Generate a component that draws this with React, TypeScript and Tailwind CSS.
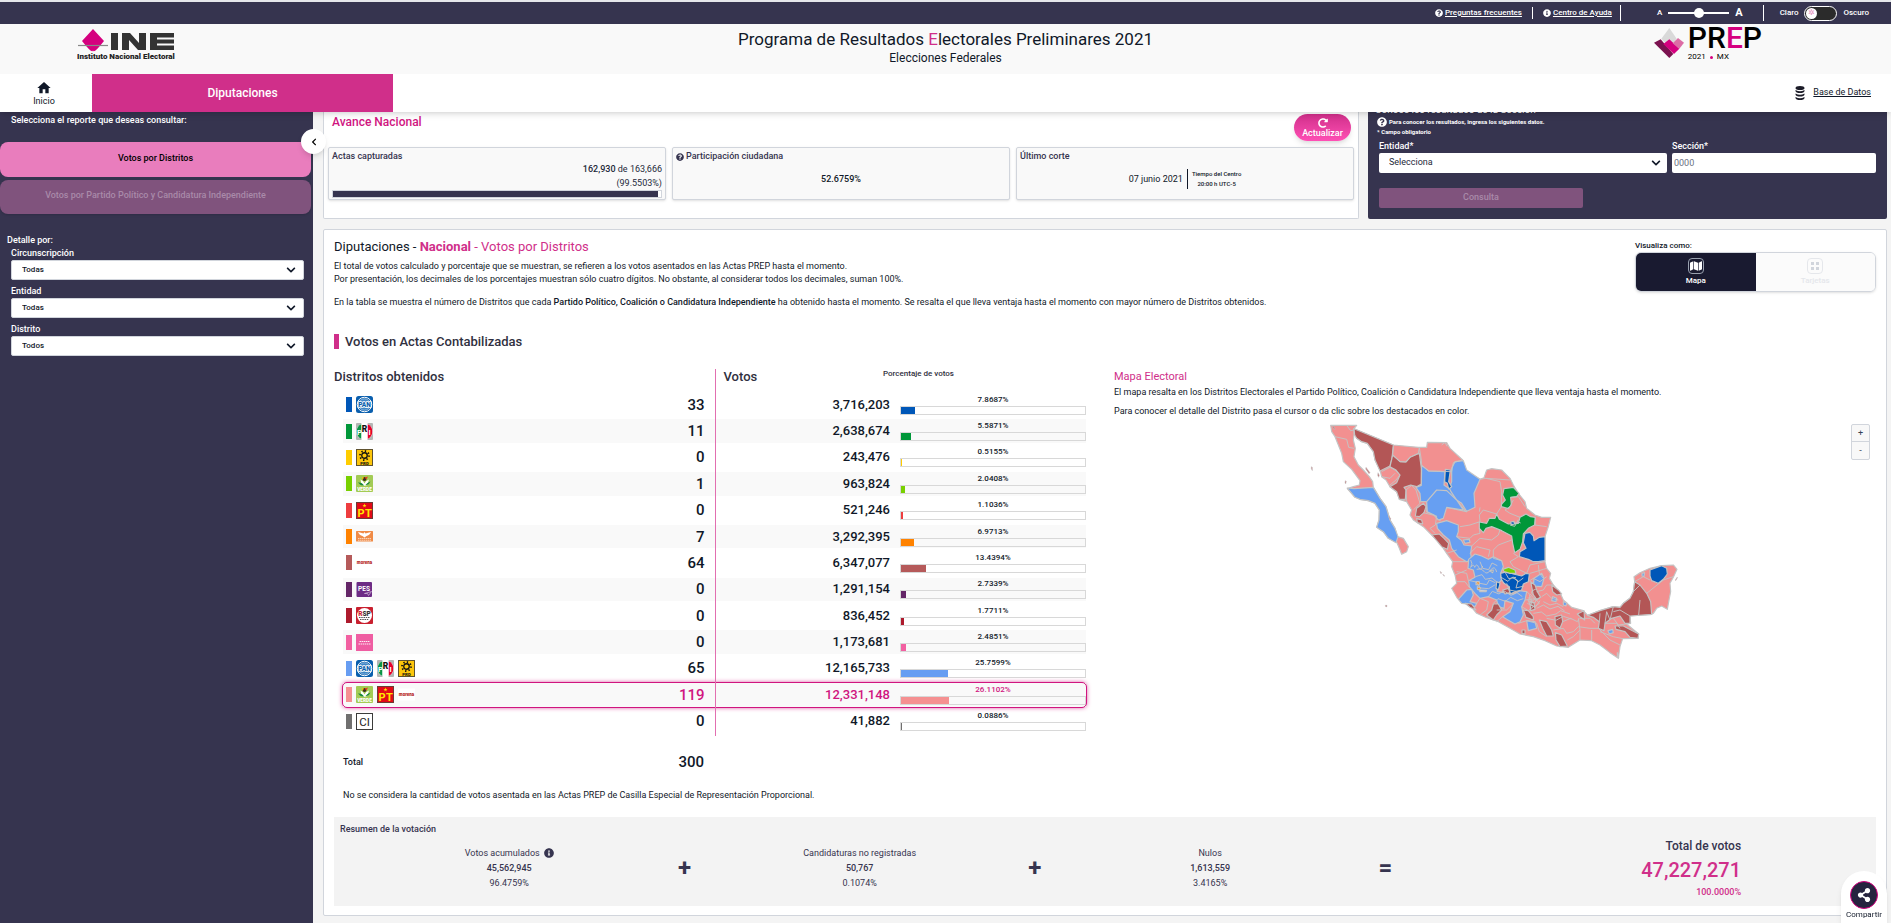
import React from "react";
import {
  FaChevronDown,
  FaChevronLeft,
  FaInfoCircle,
  FaMap,
  FaQuestionCircle,
  FaRedoAlt,
  FaShareAlt,
} from "react-icons/fa";
import { MdHome } from "react-icons/md";

type PartyKey = "pan" | "pri" | "prd" | "verde" | "pt" | "mc" | "morena" | "pes" | "rsp" | "fxm" | "ci";

interface Row {
  parties: PartyKey[];
  swatch: string;
  districts: number;
  votes: string;
  percent: number;
  highlight?: boolean;
}

const rows: Row[] = [
  { parties: ["pan"], swatch: "bg-[#0057b8]", districts: 33, votes: "3,716,203", percent: 7.8687 },
  { parties: ["pri"], swatch: "bg-[#009739]", districts: 11, votes: "2,638,674", percent: 5.5871 },
  { parties: ["prd"], swatch: "bg-[#ffcd00]", districts: 0, votes: "243,476", percent: 0.5155 },
  { parties: ["verde"], swatch: "bg-[#78d000]", districts: 1, votes: "963,824", percent: 2.0408 },
  { parties: ["pt"], swatch: "bg-[#ee3d3f]", districts: 0, votes: "521,246", percent: 1.1036 },
  { parties: ["mc"], swatch: "bg-[#ff8200]", districts: 7, votes: "3,292,395", percent: 6.9713 },
  { parties: ["morena"], swatch: "bg-[#b55a5a]", districts: 64, votes: "6,347,077", percent: 13.4394 },
  { parties: ["pes"], swatch: "bg-[#642667]", districts: 0, votes: "1,291,154", percent: 2.7339 },
  { parties: ["rsp"], swatch: "bg-[#ad1a2d]", districts: 0, votes: "836,452", percent: 1.7711 },
  { parties: ["fxm"], swatch: "bg-[#f260a1]", districts: 0, votes: "1,173,681", percent: 2.4851 },
  { parties: ["pan", "pri", "prd"], swatch: "bg-[#679df2]", districts: 65, votes: "12,165,733", percent: 25.7599 },
  {
    parties: ["verde", "pt", "morena"],
    swatch: "bg-[#f59091]",
    districts: 119,
    votes: "12,331,148",
    percent: 26.1102,
    highlight: true,
  },
  { parties: ["ci"], swatch: "bg-[#706f6f]", districts: 0, votes: "41,882", percent: 0.0886 },
];

const logoText = "Roboto, sans-serif";

function PartyLogo({ party }: { party: PartyKey }) {
  const shapes: Record<PartyKey, React.ReactNode> = {
    pan: (
      <>
        <rect width="34" height="34" rx="5" fill="#0a5fae" />
        <circle cx="17" cy="17" r="14.5" fill="none" stroke="#fff" strokeWidth="2" />
        <circle cx="17" cy="17" r="11.5" fill="#3f86c6" stroke="#fff" strokeWidth="1" />
        <text x="17" y="22" textAnchor="middle" fontSize="13" fontWeight="900" fill="#0a5fae" stroke="#fff" strokeWidth="3" paintOrder="stroke" fontFamily={logoText}>PAN</text>
      </>
    ),
    pri: (
      <>
        <rect width="34" height="34" rx="2" fill="#b4b6b5" />
        <circle cx="17" cy="17" r="16.5" fill="#fff" />
        <path d="M11 2A16.5 16.5 0 0 0 11 32z" fill="#0a9447" />
        <path d="M23 2A16.5 16.5 0 0 1 23 32z" fill="#e4002b" />
        <rect x="11" y="0" width="12" height="34" fill="#fff" />
        <text x="7" y="24" textAnchor="middle" fontSize="15" fontWeight="700" fill="#fff" fontFamily={logoText}>P</text>
        <text x="17" y="18" textAnchor="middle" fontSize="17" fontWeight="900" fill="#111" fontFamily={logoText}>R</text>
        <text x="27" y="24" textAnchor="middle" fontSize="15" fontWeight="700" fill="#fff" fontFamily={logoText}>I</text>
      </>
    ),
    prd: (
      <>
        <rect x="1" y="1" width="32" height="32" fill="#fdc60b" stroke="#5f5230" strokeWidth="2" />
        <circle cx="17" cy="13" r="5.5" fill="none" stroke="#111" strokeWidth="2.6" />
        <circle cx="17" cy="13" r="9" fill="none" stroke="#111" strokeWidth="3.6" strokeDasharray="2.6 4.4" />
        <text x="17" y="32" textAnchor="middle" fontSize="8.5" fontWeight="900" fill="#111" fontFamily={logoText}>PRD</text>
      </>
    ),
    verde: (
      <>
        <rect width="34" height="34" rx="2" fill="#a3cb55" />
        <path d="M9 9q6 2 8 8q2-6 9-8l-3 10q-6 5-12 0z" fill="#fff" />
        <path d="M4 15q8-1 12 6q-7 1-12-6M29 13q-7 2-10 7q6 1 10-7" fill="#18873f" />
        <circle cx="17" cy="8" r="4" fill="#3a2d1d" />
        <path d="M17 5l7-2l-3 6z" fill="#e2431e" />
        <path d="M12 4l4 1l-3 5z" fill="#f6c700" />
        <text x="17" y="32" textAnchor="middle" fontSize="9.5" fontWeight="900" fill="#fff" fontFamily={logoText}>VERDE</text>
      </>
    ),
    pt: (
      <>
        <rect x="1" y="1" width="32" height="32" fill="#e20a17" stroke="#6d3a35" strokeWidth="2" />
        <text x="10" y="29" textAnchor="middle" fontSize="22" fontWeight="700" fill="#ffe600" fontFamily={logoText}>P</text>
        <text x="25" y="29" textAnchor="middle" fontSize="22" fontWeight="700" fill="#ffe600" fontFamily={logoText}>T</text>
        <path d="M17 3l1 3l3 0l-2.500 2l1 3l-2.500-2l-2.500 2l1-3l-2.500-2l3 0z" fill="#ffe600" />
      </>
    ),
    mc: (
      <>
        <rect y="6" width="34" height="21" rx="1" fill="#f08b46" />
        <path d="M4 8q6 1 11 3l2-3l2 3q5-2 11-3q-3 7-9 8l-4 3l-4-3q-6-1-9-8z" fill="#fff" />
        <path d="M4 21h26M4 24.500h26" stroke="#fff" strokeWidth="1.6" strokeDasharray="3 1" opacity=".75" />
      </>
    ),
    morena: (
      <>
        <rect y="5" width="34" height="24" fill="#fff" />
        <text x="17" y="20" textAnchor="middle" fontSize="9" fontWeight="900" fill="#b5261e" fontFamily={logoText}>morena</text>
      </>
    ),
    pes: (
      <>
        <rect x="1" y="2" width="31" height="30" rx="2" fill="#6d2c85" />
        <text x="16" y="20" textAnchor="middle" fontSize="13" fontWeight="700" fill="#fff" fontFamily={logoText}>PES</text>
        <path d="M17 25l14-4l-6 8l-2-4z" fill="none" stroke="#d8c3e0" strokeWidth="1.3" />
      </>
    ),
    rsp: (
      <>
        <rect width="34" height="34" rx="2" fill="#c9202f" />
        <circle cx="17" cy="17" r="15" fill="#fff" />
        <text x="17" y="17" textAnchor="middle" fontSize="13" fontWeight="900" fill="#333" fontFamily={logoText}>
          <tspan fill="#c9202f">R</tspan>SP
        </text>
        <path d="M6 21h22M8 25h18" stroke="#555" strokeWidth="2" strokeDasharray="3 1.500" />
      </>
    ),
    fxm: (
      <>
        <rect width="34" height="34" fill="#ef5da2" />
        <path d="M7 15h20M5 20h24" stroke="#fff" strokeWidth="2.400" strokeDasharray="3 1.200" opacity=".9" />
      </>
    ),
    ci: (
      <>
        <rect x="1" y="1" width="32" height="32" fill="#fff" stroke="#3c3c3b" strokeWidth="2" />
        <text x="17" y="25" textAnchor="middle" fontSize="23" fill="#222" fontFamily={logoText}>CI</text>
      </>
    ),
  };
  return (
    <svg viewBox="0 0 34 34" className="size-[17px] shrink-0" role="img" aria-label={party}>
      {shapes[party]}
    </svg>
  );
}

function SelectField({ id, label, value }: { id: string; label: string; value: string }) {
  return (
    <div className="flex flex-col gap-px">
      <label htmlFor={id} className="text-[9px] leading-3 font-medium text-white">{label}</label>
      <div className="relative">
        <select id={id} className="block h-5 w-full appearance-none rounded-xs border border-gray-300 bg-white pl-2.5 text-[8px] font-medium text-gray-900">
          <option>{value}</option>
        </select>
        <FaChevronDown className="pointer-events-none absolute top-[5px] right-2 size-2.5 text-gray-900" />
      </div>
    </div>
  );
}

function IneLogo() {
  return (
    <svg viewBox="0 0 98 31" className="h-[31px] w-[98px]" role="img" aria-label="INE Instituto Nacional Electoral">
      <path d="M16 0L27 12Q16 26 16 21Q16 26 5 12z" fill="#d5007f" />
      <path d="M1 16.500H31" stroke="#888" strokeWidth="1.200" />
      <path d="M34 4h7v17h-7zM45 4h8l9 10V4h7v17h-8l-9-10v10h-7z" fill="#333" />
      <path d="M73 4h24v4.500h-17v2h17v4h-17v2h17V21H73z" fill="#333" />
      <text x="0" y="30" fontSize="8" fontWeight="900" fill="#222" fontFamily="Roboto, sans-serif">Instituto Nacional Electoral</text>
    </svg>
  );
}

function PrepLogo() {
  return (
    <div className="flex items-start gap-1">
      <svg viewBox="0 0 90 90" className="mt-1 size-[30px]" aria-hidden="true">
        <path d="M46 0L68 32L46 58L22 32z" fill="#d9d9d9" />
        <path d="M0 44L20 34L58 78L46 90z" fill="#7b1250" />
        <path d="M28 48L46 34L76 62L60 78z" fill="#d5007f" />
        <path d="M56 46L72 30L90 44L76 62z" fill="#dc6ca5" />
      </svg>
      <div className="text-black">
        <div className="text-[30px] leading-7 font-medium">
          PR<span className="text-[#d5007f]">E</span>P
        </div>
        <div className="flex items-center gap-1 text-[8px] leading-[10px]">
          2021 <span className="size-[3px] rounded-full bg-[#d5007f]" /> MX
        </div>
      </div>
    </div>
  );
}

function DatabaseIcon() {
  return (
    <svg viewBox="0 0 20 28" className="h-3.5 w-2.5 fill-[#1c1c28]" aria-hidden="true">
      <ellipse cx="10" cy="4" rx="9" ry="4" />
      <path d="M1 8q9 5 18 0v2q-1 4-9 4t-9-4zM1 15q9 5 18 0v2q-1 4-9 4t-9-4zM1 22q9 5 18 0v2q-1 4-9 4t-9-4z" />
    </svg>
  );
}

const SALMON = "#f29090";
const RED = "#b35656";
const BLUE = "#679ff2";
const NAVY = "#0057b8";
const GREEN = "#009739";

const regions: { fill: string; d: string }[] = [
  { fill: SALMON, d: "M152 46L230 46L222 56L222 75L220 90L226 115L222 140L235 165L250 180L268 200L278 215L280 232L300 265L318 290L330 330L345 355L352 380L370 385L385 410L380 425L365 433L358 415L350 397L325 385L310 365L290 352L297 330L298 300L285 280L265 272L240 268L225 262L202 236L220 230L238 225L240 212L215 178L190 155L185 130L175 105L165 80L155 65z" },
  { fill: SALMON, d: "M222 56L340 105L415 112L440 112L442 97L500 98L510 115L548 150L552 180L600 208L612 203L620 180L635 176L665 180L690 205L700 225L715 250L735 275L740 295L765 315L785 322L812 322L805 350L795 380L795 455L800 475L812 490L808 505L820 525L840 548L850 570L875 592L910 602L923 616L960 602L1000 590L1020 592L1030 580L1050 565L1060 545L1064 515L1062 500L1080 488L1110 475L1145 467L1180 465L1191 478L1180 502L1170 520L1172 545L1168 565L1162 598L1145 588L1130 595L1120 610L1115 613L1050 618L1052 640L1040 642L1076 672L1074 685L1028 686L1020 710L1015 745L990 728L960 705L935 692L900 690L865 712L830 708L795 692L760 680L720 672L690 655L655 635L620 623L590 610L575 592L555 580L532 565L515 535L530 520L525 495L515 470L518 455L500 430L480 400L455 375L430 350L400 330L390 315L395 300L380 275L358 268L350 245L330 230L318 210L305 200L300 180L285 150L280 125L262 100L245 95L230 85z" },
  { fill: BLUE, d: "M202 234L222 236L280 232L300 265L318 290L330 330L345 355L354 380L348 398L325 385L310 365L290 352L297 330L298 300L285 280L265 272L240 268L225 262z" },
  { fill: RED, d: "M222 56L340 105L336 145L330 168L300 183L285 150L280 125L262 100L245 95L230 85L224 75z" },
  { fill: RED, d: "M338 135L360 155L378 156L390 142L418 130L424 175L424 222L410 230L392 225L372 232L378 240L376 268L358 268L350 245L330 230L350 218L360 195L348 180L330 170z" },
  { fill: RED, d: "M410 295L430 280L438 290L432 308L418 320L406 318zM410 326L425 330L428 342L412 338zM456 375L478 372L492 385L506 400L502 418L485 410L470 392z" },
  { fill: BLUE, d: "M425 166L446 183L495 185L492 225L510 238L530 270L555 302L560 305L500 292L490 305L480 332L470 318L440 305L440 275L422 275L420 250L408 232L424 226z" },
  { fill: BLUE, d: "M515 175L525 155L550 152L560 180L600 208L582 250L585 292L560 304L545 280L530 270L515 248L508 235L515 215z" },
  { fill: NAVY, d: "M496 178L511 180L506 215L515 230L506 237L502 220L494 215z" },
  { fill: BLUE, d: "M440 275L470 240L500 242L530 270L550 300L500 292L490 325L475 330L462 315L442 305z" },
  { fill: BLUE, d: "M470 340L500 332L535 345L535 365L530 380L545 392L552 405L575 408L572 430L575 450L560 455L535 440L515 415L508 390L490 375L472 355z" },
  { fill: BLUE, d: "M550 390L568 388L570 397L555 400z" },
  { fill: GREEN, d: "M672 236L700 232L717 250L710 260L692 262L694 285L685 296L664 290L665 282L676 270L668 255z" },
  { fill: GREEN, d: "M598 336L620 340L628 325L645 325L650 312L658 328L685 342L715 340L720 322L738 312L752 320L766 322L764 345L745 355L730 372L728 395L720 418L704 428L698 400L695 378L665 362L635 350L618 355L610 368L598 355z" },
  { fill: NAVY, d: "M735 370L750 367L760 378L762 392L778 382L795 380L795 452L775 455L760 455L745 448L718 440L720 425L738 415L730 398z" },
  { fill: NAVY, d: "M692 336L702 334L704 342L694 344z" },
  { fill: BLUE, d: "M566 448L585 432L605 438L625 448L640 440L665 452L670 470L662 490L665 510L650 525L652 545L700 552L720 542L740 545L735 570L725 590L730 615L720 635L705 642L680 628L668 620L690 605L700 580L675 572L672 595L655 590L650 570L625 560L600 565L585 550L568 530L566 512L585 502L580 480L564 475z" },
  { fill: BLUE, d: "M535 568L560 540L575 538L580 555L570 575L590 580L585 590L560 582L545 580zM740 632L765 635L770 655L745 662zM762 505L785 490L792 505L785 530L760 528zM818 560L830 565L828 575L815 572zM850 575L860 578L858 588L850 585z" },
  { fill: NAVY, d: "M662 490L680 485L700 492L725 498L738 490L748 492L745 515L730 522L725 540L705 545L690 552L688 530L672 520L664 508zM650 515L660 520L655 540L648 535zM630 482L640 480L638 488z" },
  { fill: "#78d000", d: "M668 478L685 472L705 480L708 490L690 490L672 485z" },
  { fill: "#ff9326", d: "M588 515L598 515L598 525L588 524zM592 530L602 534L598 540L592 538z" },
  { fill: "#ffffff", d: "M598 540L620 541L618 545L600 545z" },
  { fill: RED, d: "M620 615L635 600L640 582L655 582L665 600L650 615L640 630zM555 580L575 582L588 600L570 592zM730 600L745 602L760 620L760 630L738 622zM778 630L800 635L815 660L820 678L800 678L788 655zM826 668L845 675L862 708L840 710L828 690zM825 620L845 615L848 635L840 655L826 645zM752 515L765 525L772 545L782 562L770 568L760 555zM815 525L835 540L845 552L830 555L818 545zM750 575L762 578L765 598L752 602zM668 540L685 535L690 548L675 552zM726 660L735 660L735 672L726 670zM892 612L912 602L914 630L900 620z" },
  { fill: RED, d: "M923 616L960 602L1000 590L1020 592L1030 580L1050 565L1060 545L1064 515L1080 525L1100 550L1112 575L1115 613L1050 618L1050 640L1035 640L1020 618L995 625L975 640L972 662L955 655L958 635L940 622z" },
  { fill: RED, d: "M1005 648L1030 648L1076 672L1074 685L1050 682L1035 665L1008 658zM1012 728L1016 742L1012 740z" },
  { fill: BLUE, d: "M984 662L998 658L1000 668L988 672zM1086 490L1094 488L1092 500L1086 498z" },
  { fill: NAVY, d: "M1110 480L1145 467L1160 475L1162 492L1150 508L1135 520L1115 512L1110 498z" },
];

const borders = [
  "M165 80L200 88L206 112L222 115M200 46L212 62L222 60",
  "M340 110L338 135L360 155L378 156L390 142L415 130L418 112L424 150L425 166L446 183L515 185L520 158L548 150",
  "M305 185L330 172L345 180L360 195L348 210L330 225M305 200L330 205L345 190",
  "M380 275L378 240L395 226L408 240L420 280L400 300M430 308L470 318L466 345L450 355L465 370",
  "M600 208L618 205L660 215L665 245L664 290L650 312L610 300L598 315L600 335L570 345L540 350M600 292L598 305",
  "M618 205L690 210M694 262L715 260L735 290M700 270L690 290L675 300L690 310L720 322M764 345L800 350M766 322L765 345",
  "M530 380L570 385L580 375L600 370L598 355M575 408L600 385L635 390L655 375L660 360M570 430L590 410L630 420L625 440M640 420L655 405L695 390M640 420L640 445L665 452",
  "M700 430L715 440L690 455L700 470L740 490L750 465L795 455M500 430L530 420M518 455L560 455M530 485L560 490L565 512M530 515L555 515L570 535M525 495L560 480",
  "M572 450q8 12 0 22q10 -12 12 0q6 -14 12 0t12 -4M590 478q14 -6 22 6t20 -4t18 6M600 455l8 20l18 4l10 -20l16 8M586 500l20 -6l10 14l20 -4l14 12M600 520l20 4l8 -14l18 8M570 512l18 4l14 18l24 2l20 -12",
  "M625 560l12 -16l20 8l14 -10l22 14l18 -8l16 12M640 580l14 -14l22 8l16 -12l20 10l18 -6M660 500l24 14l12 -12l18 10l-6 22l24 -6M680 520l8 20l20 4M700 500l14 16l16 -12M676 488l10 18l22 -4",
  "M590 580L600 565L625 575L620 600L600 615M650 600L680 600L700 580M725 590L745 602L760 590M668 620L650 635M715 640L740 632L770 640L778 665L800 680",
  "M740 545q12 6 8 20t16 14q10 -14 -4 -24t8 -18M744 562l12 12l10 -8l12 14l-14 10l-14 -6l-6 -14M750 552l18 20l14 -10M742 580l24 12l14 -20M752 558l4 30M736 570l30 -4",
  "M745 515L760 505L780 515L800 500M775 465L778 490L790 505M750 490L790 478L800 475M770 545L790 540L800 525L820 525M785 560L800 550L815 565L835 570M790 575L810 585L830 580L850 590",
  "M770 595l20 -10l20 12l24 -8l20 14M760 610l24 -4l16 12l28 -6l14 -10l28 10M800 625l28 6l22 -12l24 8M848 635L872 625L892 635L898 625M820 660L850 655L860 670L880 665L895 650M862 690L880 680L900 660L895 625",
  "M895 650L930 655L955 655M900 625L930 625L945 640M900 660L900 690M935 660L935 690M955 655L990 690L1020 705M960 665L1000 680L1028 686M975 640L1010 640L1020 655M1000 625L1015 645L1040 642",
  "M958 635L960 610M975 640L980 605L990 630L1000 590M1000 605L1020 600L1050 618M1080 570L1076 615M1064 515L1090 500L1110 510M1060 545L1080 525M1100 550L1150 510L1180 500",
  "M700 335l10 6l4 -12M690 345l14 4l8 -14l10 4M485 105l10 -8l6 12",
];

function ElectoralMap() {
  return (
    <svg viewBox="0 36 1290 724" className="block h-auto w-[430px] max-w-full" role="img" aria-label="Mapa Electoral">
      <g stroke="#c4c4c4" strokeWidth="3.500" strokeLinejoin="round">
        {regions.map((region, i) => (
          <path key={i} d={region.d} fill={region.fill} />
        ))}
        {borders.map((d, i) => (
          <path key={i} d={d} fill="none" strokeWidth="2.800" />
        ))}
      </g>
      <path
        d="M94 170l3 2v10l-3-6zM196 212l3 2l-2 8l-2-4zM258 172l12 16l-3 3l-10-14zM294 188l4 8l-2 6l-3-6zM480 484l5 4l-2 3zM488 492l6 6l-2 1zM316 586l5 0l0 4l-4 0zM325 315l8 12l-3 2zM1186 510l6-9l0 3l-5 8zM157 48l6 2l2 8l-4-1z"
        fill="#c07a7c"
        stroke="#c4c4c4"
        strokeWidth="1.500"
      />
    </svg>
  );
}

function TopBar() {
  return (
    <div className="flex h-6 items-center justify-end border-t-2 border-gray-200 bg-[#36344f] pr-[22px] text-[8px] font-medium text-white">
      <a href="#faq" className="flex items-center gap-0.5">
        <FaQuestionCircle className="size-2" /> <span className="underline">Preguntas frecuentes</span>
      </a>
      <span className="mx-2.5 h-3 w-px bg-white" />
      <a href="#ayuda" className="flex items-center gap-0.5">
        <FaInfoCircle className="size-2" /> <span className="underline">Centro de Ayuda</span>
      </a>
      <span className="mr-9 ml-2 h-4 w-px bg-white" />
      <label className="flex items-center gap-1.5">
        <span>A</span>
        <input
          type="range"
          defaultValue={50}
          aria-label="Tamaño de texto"
          className="h-0.5 w-[61px] appearance-none bg-white [&::-webkit-slider-thumb]:size-2.5 [&::-webkit-slider-thumb]:appearance-none [&::-webkit-slider-thumb]:rounded-full [&::-webkit-slider-thumb]:bg-white"
        />
        <span className="text-[11px] font-bold">A</span>
      </label>
      <span className="mr-4 ml-5 h-4 w-px bg-white" />
      <label className="flex items-center gap-1.5">
        <span>Claro</span>
        <input
          type="checkbox"
          className="flex h-[15px] w-[33px] appearance-none items-center rounded-full border border-white bg-[#2b2b2b] before:ml-px before:flex before:size-[11px] before:items-center before:justify-center before:rounded-full before:bg-white before:text-[8px] before:leading-none before:text-[#e58fbd] before:content-['✲']"
        />
        <span>Oscuro</span>
      </label>
    </div>
  );
}

function Header() {
  return (
    <header className="relative z-10 shadow-md">
      <TopBar />
      <div className="grid h-[50px] grid-cols-[1fr_auto_1fr] bg-[#f9f9f9]">
        <div className="pt-[5px] pl-[77px]"><IneLogo /></div>
        <div className="pt-1 text-center text-gray-900">
          <h1 className="text-[17px] leading-[22px]">
            Programa de Resultados <span className="text-[#d02f8a]">E</span>lectorales Preliminares 2021
          </h1>
          <p className="text-xs leading-4">Elecciones Federales</p>
        </div>
        <div className="flex justify-end pr-[129px]"><PrepLogo /></div>
      </div>
      <nav className="flex h-[38px] items-stretch bg-white">
        <a href="#inicio" className="flex w-[92px] flex-col items-center justify-center pr-1 text-[9px] leading-[11px] text-gray-900">
          <MdHome className="size-4" />
          Inicio
        </a>
        <a href="#diputaciones" className="flex w-[301px] items-center justify-center bg-[#d02f8a] text-xs font-medium text-white">
          Diputaciones
        </a>
        <a href="#datos" className="mr-5 ml-auto flex items-center gap-2 text-[9px] text-gray-900">
          <DatabaseIcon />
          <span className="underline">Base de Datos</span>
        </a>
      </nav>
    </header>
  );
}

function Sidebar() {
  return (
    <aside className="relative w-[313px] shrink-0 bg-[#36344f] pt-px">
      <p className="pl-[11px] text-[9px] leading-[14px] font-medium text-white">Selecciona el reporte que deseas consultar:</p>
      <div className="mt-[15px] mr-0.5 flex flex-col gap-[3px] text-[9px] font-medium">
        <button className="h-[35px] rounded-lg bg-[#e97dbd] pb-0.5 text-black">Votos por Distritos</button>
        <button disabled className="h-[34px] rounded-lg bg-[#80537d] pb-0.5 text-[#a98aa9] shadow">
          Votos por Partido Político y Candidatura Independiente
        </button>
      </div>
      <button
        aria-label="Contraer menú"
        className="absolute top-[17px] -right-[13px] flex size-[25px] items-center justify-center rounded-full bg-white text-black shadow-md"
      >
        <FaChevronLeft className="size-2" />
      </button>
      <h2 className="mt-[19px] pl-[7px] text-[9px] leading-[14px] font-medium text-white">Detalle por:</h2>
      <div className="flex flex-col gap-[5px] pr-[9px] pl-[11px]">
        <SelectField id="circunscripcion" label="Circunscripción" value="Todas" />
        <SelectField id="entidad" label="Entidad" value="Todas" />
        <SelectField id="distrito" label="Distrito" value="Todos" />
      </div>
    </aside>
  );
}

function Progress() {
  const box = "h-[53px] rounded-xs border border-gray-300 bg-[#f9f9f9] px-[3px] pt-0.5 shadow-sm";
  return (
    <section className="flex-1 rounded-b-xs border-x border-b border-gray-300 bg-white px-1 pb-[18px]">
      <div className="flex h-[35px] items-start justify-between pr-[3px] pl-1">
        <h2 className="pt-0.5 text-xs leading-4 font-medium text-[#d0157f]">Avance Nacional</h2>
        <button className="mt-0.5 flex h-[27px] w-[57px] flex-col items-center justify-center rounded-full bg-linear-to-b from-[#d02f8a] to-[#ff4fb5] text-[9px] leading-[10px] font-medium text-white shadow-md">
          <FaRedoAlt className="size-2.5" />
          Actualizar
        </button>
      </div>
      <div className="grid grid-cols-3 gap-1.5 text-[9px] text-[#36344f]">
        <div className={box}>
          <h3 className="font-medium leading-[13px]">Actas capturadas</h3>
          <p className="text-right leading-[13px] text-gray-800"><b className="font-medium">162,930</b> de 163,666</p>
          <p className="text-right leading-[14px] text-gray-800">(99.5503%)</p>
          <div className="h-2 border border-gray-300 bg-white"><div className="h-full w-[99%] bg-[#36344f]" /></div>
        </div>
        <div className={box}>
          <h3 className="flex items-center gap-0.5 font-medium leading-[13px]"><FaQuestionCircle className="size-2" /> Participación ciudadana</h3>
          <p className="mt-2.5 text-center font-medium leading-[13px] text-gray-900">52.6759%</p>
        </div>
        <div className={box}>
          <h3 className="font-medium leading-[13px]">Último corte</h3>
          <div className="mt-1.5 flex items-center justify-center text-gray-900">
            <span className="border-r border-gray-900 pr-1 leading-5">07 junio 2021</span>
            <span className="pl-1 text-center text-[6px] leading-[10px] font-medium">Tiempo del Centro<br />20:00 h UTC-5</span>
          </div>
        </div>
      </div>
    </section>
  );
}

function SectionQuery() {
  return (
    <form className="w-[519px] rounded-b-xs bg-[#36344f] px-[11px] pb-[11px] text-white">
      <h2 className="-mt-[9px] -ml-1 text-[10px] leading-[14px]">Conoce los resultados de la Sección</h2>
      <p className="-ml-0.5 flex items-center gap-0.5 text-[6px] leading-[10px] font-bold"><FaQuestionCircle className="size-2.5" /> Para conocer los resultados, ingresa los siguientes datos.</p>
      <p className="-ml-0.5 text-[6px] leading-[10px] font-bold">* Campo obligatorio</p>
      <div className="mt-[3px] grid grid-cols-[288fr_204fr] gap-[5px]">
        <div className="flex flex-col gap-px">
          <label htmlFor="q-entidad" className="text-[9px] leading-3 font-medium">Entidad*</label>
          <div className="relative">
            <select id="q-entidad" className="block h-5 w-full appearance-none rounded-xs bg-white pl-2.5 text-[9px] text-gray-800">
              <option>Selecciona</option>
            </select>
            <FaChevronDown className="pointer-events-none absolute top-[5px] right-1.5 size-2.5 text-gray-900" />
          </div>
        </div>
        <div className="flex flex-col gap-px">
          <label htmlFor="q-seccion" className="text-[9px] leading-3 font-medium">Sección*</label>
          <input id="q-seccion" placeholder="0000" className="block h-5 w-full rounded-xs bg-white px-0.5 text-[9px] text-gray-800 placeholder:text-gray-500" />
        </div>
      </div>
      <button disabled className="mt-[15px] block h-5 w-[204px] rounded-xs bg-[#80537d] text-[9px] font-medium text-[#a98aa9]">Consulta</button>
    </form>
  );
}

function ResultsTable() {
  return (
    <div className="ml-[9px]">
      <div className="relative">
        <table className="h-[367px] w-full table-fixed border-separate border-spacing-x-0 border-spacing-y-[3px] text-gray-900">
          <colgroup>
            <col className="w-1/2" />
            <col />
            <col className="w-[196px]" />
          </colgroup>
          <thead>
            <tr className="h-[18px] align-top text-[#303040]">
              <th scope="col" className="p-0 text-left text-[13px] leading-[10px] font-medium"><span className="-ml-[9px]">Distritos obtenidos</span></th>
              <th scope="col" className="p-0 pl-[9px] text-left text-[13px] leading-[10px] font-medium">Votos</th>
              <th scope="col" className="p-0 text-left text-[8px] leading-1 font-medium whitespace-nowrap"><span className="-ml-[7px]">Porcentaje de votos</span></th>
            </tr>
          </thead>
          <tbody>
            {rows.map((row, i) => (
              <tr
                key={i}
                className={
                  row.highlight
                    ? "rounded-sm bg-[#f9f9f9] text-[#d0157f] shadow-[0_0_5px_#d0157f] outline outline-[#d0157f]"
                    : i % 2 === 1
                      ? "bg-[#f9f9f9]"
                      : ""
                }
              >
                <td className="p-0">
                  <div className="flex items-center gap-1 pr-2.5 pl-[3px]">
                    <span className={`h-[15px] w-1.5 shrink-0 ${row.swatch}`} />
                    {row.parties.map((party) => <PartyLogo key={party} party={party} />)}
                    <span className="ml-auto text-[15px] leading-4 font-medium">{row.districts}</span>
                  </div>
                </td>
                <td className="p-0 text-right text-[13px] leading-4 font-medium">{row.votes}</td>
                <td className="p-0 pl-2.5 text-center text-[8px] leading-[10px] font-medium">
                  {row.percent.toFixed(4)}%
                  <div className="mt-px h-[9px] border border-[#d8d8d8]">
                    <div className={`h-full min-w-px ${row.swatch}`} style={{ width: `${row.percent}%` }} />
                  </div>
                </td>
              </tr>
            ))}
          </tbody>
        </table>
        <div className="absolute inset-y-0 left-1/2 w-px bg-[#e26fb0]" />
      </div>
      <div className="mt-4 flex items-center leading-5 font-medium text-gray-900">
        <span className="w-1/2 text-[9px]">Total</span>
        <span className="-ml-9 text-[15px]">300</span>
      </div>
      <p className="mt-4 text-[9px] leading-[14px] text-gray-900">
        No se considera la cantidad de votos asentada en las Actas PREP de Casilla Especial de Representación Proporcional.
      </p>
    </div>
  );
}

function SummaryCell({ title, value, percent, info }: { title: string; value: string; percent: string; info?: boolean }) {
  return (
    <div className="text-center text-[9px] leading-[15px] whitespace-nowrap">
      <p className="flex items-center justify-center gap-1">{title}{info && <FaInfoCircle className="size-2.5" />}</p>
      <p className="font-medium">{value}</p>
      <p>{percent}</p>
    </div>
  );
}

function Operator({ sign }: { sign: string }) {
  return <div className="text-center text-2xl leading-6 font-bold">{sign}</div>;
}

function Summary() {
  return (
    <section className="mt-[15px] bg-[#f3f3f3] pt-[5px] pb-1.5 text-[#36344f]">
      <h3 className="pl-1.5 text-[9px] leading-[14px] font-medium">Resumen de la votación</h3>
      <div className="grid h-16 grid-cols-[0.5fr_repeat(6,1fr)_1.53fr_0.77fr] items-center">
        <span />
        <SummaryCell title="Votos acumulados" value="45,562,945" percent="96.4759%" info />
        <Operator sign="+" />
        <SummaryCell title="Candidaturas no registradas" value="50,767" percent="0.1074%" />
        <Operator sign="+" />
        <SummaryCell title="Nulos" value="1,613,559" percent="3.4165%" />
        <Operator sign="=" />
        <div className="text-right font-medium">
          <p className="text-xs leading-[18px]">Total de votos</p>
          <p className="text-xl leading-[30px] text-[#d02f8a]">47,227,271</p>
          <p className="text-[9px] leading-[14px] text-[#d02f8a]">100.0000%</p>
        </div>
      </div>
    </section>
  );
}

function Results() {
  return (
    <section className="mt-2.5 rounded-xs border border-gray-300 bg-white px-2.5 pt-[7px] pb-[9px] text-gray-900">
      <div className="flex items-start justify-between">
        <div className="text-[9px] leading-[13px]">
          <h2 className="mb-[3px] text-[13px] leading-5">
            Diputaciones - <b className="font-bold text-[#d02f8a]">Nacional</b> <span className="text-[#d02f8a]">- Votos por Distritos</span>
          </h2>
          <p>El total de votos calculado y porcentaje que se muestran, se refieren a los votos asentados en las Actas PREP hasta el momento.</p>
          <p>Por presentación, los decimales de los porcentajes muestran sólo cuatro dígitos. No obstante, al considerar todos los decimales, suman 100%.</p>
          <p className="mt-2.5">
            En la tabla se muestra el número de Distritos que cada <b className="font-medium">Partido Político, Coalición o Candidatura Independiente</b> ha obtenido hasta el momento. Se resalta el que lleva ventaja hasta el momento con mayor número de Distritos obtenidos.
          </p>
        </div>
        <div className="pt-[3px]">
          <p className="text-[8px] leading-3 font-medium">Visualiza como:</p>
          <div className="flex h-10 w-[241px] overflow-hidden rounded-md border border-gray-300 text-[8px] leading-[10px] font-medium shadow-sm">
            <button className="flex flex-1 flex-col items-center justify-center gap-0.5 bg-[#191a30] text-white">
              <span className="flex size-4 items-center justify-center rounded-sm border border-gray-400"><FaMap className="size-3" /></span>
              Mapa
            </button>
            <button disabled className="flex flex-1 flex-col items-center justify-center gap-0.5 bg-[#fbfbfb] text-gray-200">
              <span className="flex size-4 items-center justify-center rounded-sm border border-gray-200">
                <svg viewBox="0 0 8 8" className="size-2 fill-gray-300" aria-hidden="true"><path d="M0 0h3v3H0zM5 0h3v3H5zM0 5h3v3H0zM5 5h3v3H5z" /></svg>
              </span>
              Tarjetas
            </button>
          </div>
        </div>
      </div>
      <h3 className="mt-[25px] flex items-center gap-1.5 text-[13px] leading-[15px] font-medium text-[#303040]">
        <span className="h-[15px] w-[5px] bg-[#d02f8a]" />
        Votos en Actas Contabilizadas
      </h3>
      <div className="mt-5 grid grid-cols-[752fr_762fr] gap-7">
        <ResultsTable />
        <div className="text-[9px] leading-[13px]">
          <h3 className="text-[11px] leading-4 text-[#d02f8a]">Mapa Electoral</h3>
          <p className="mt-px">El mapa resalta en los Distritos Electorales el Partido Político, Coalición o Candidatura Independiente que lleva ventaja hasta el momento.</p>
          <p className="mt-1.5">Para conocer el detalle del Distrito pasa el cursor o da clic sobre los destacados en color.</p>
          <div className="relative mt-1 flex justify-center">
            <ElectoralMap />
            <div className="absolute top-0.5 right-1.5 flex flex-col rounded-xs border border-gray-300 bg-[#f8f8f8] text-[9px] text-gray-700">
              <button aria-label="Acercar" className="size-[17px] border-b border-gray-300">+</button>
              <button aria-label="Alejar" className="size-[17px]">-</button>
            </div>
          </div>
        </div>
      </div>
      <Summary />
    </section>
  );
}

export default function App() {
  return (
    <div className="flex min-h-screen flex-col bg-[#f4f4f4] font-['Roboto',sans-serif]">
      <Header />
      <div className="flex flex-1">
        <Sidebar />
        <main className="min-w-0 flex-1 pr-1 pb-1.5 pl-2.5">
          <div className="flex gap-[9px]">
            <Progress />
            <SectionQuery />
          </div>
          <Results />
        </main>
      </div>
      <button className="fixed right-1 bottom-0 flex h-[52px] w-[46px] flex-col items-center rounded-t-full bg-white pt-2.5 text-[8px] leading-3 text-gray-900 shadow-md">
        <span className="flex size-7 shrink-0 items-center justify-center rounded-full border border-[#d5007f] bg-[#26243f] text-white">
          <FaShareAlt className="size-3.5" />
        </span>
        Compartir
      </button>
    </div>
  );
}
